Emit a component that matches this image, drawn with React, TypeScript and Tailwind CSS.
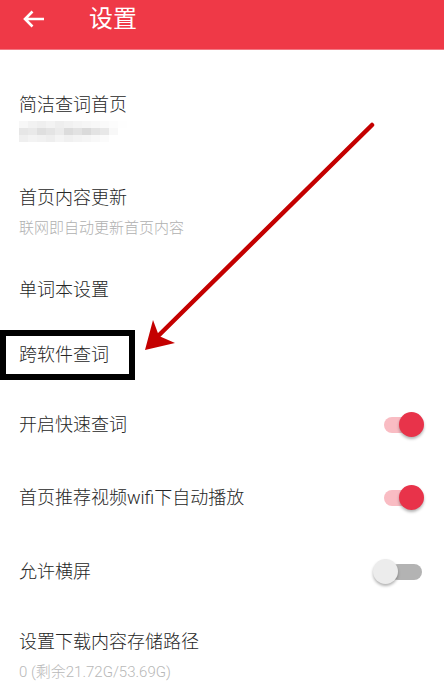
import React from "react";

const font = { fontFamily: 'Roboto, "Noto Sans CJK SC", "Noto Sans", sans-serif' };

function Toggle({ on }: { on: boolean }) {
  return (
    <div className="relative w-[44px] h-[26px] flex items-center">
      <div
        className={
          on
            ? "ml-[2px] w-[32px] h-[16px] rounded-full bg-[#f9bcc3]"
            : "ml-[8px] w-[32px] h-[16px] rounded-full bg-[#b3b3b3]"
        }
      />
      <div
        className={
          on
            ? "absolute left-[17px] top-[0px] w-[25px] h-[25px] rounded-full bg-[#e8334a] shadow-[0_2px_3px_rgba(0,0,0,0.3)]"
            : "absolute left-[-9px] top-[0px] w-[25px] h-[25px] rounded-full bg-[#ececec] shadow-[0_2px_3px_rgba(0,0,0,0.3)]"
        }
      />
    </div>
  );
}

const mosaic = [
  ["#f7f7f7", "#f2f2f2", "#efefef", "#f3f3f3", "#eeeeee", "#f1f1f1", "#f4f4f4", "#f6f6f6", "#f8f8f8", "#fafafa", "#fcfcfc", "#fefefe"],
  ["#e6e6e6", "#e9e9e9", "#dfdfdf", "#e4e4e4", "#ebebeb", "#dcdcdc", "#e2e2e2", "#dadada", "#e3e3e3", "#e8e8e8", "#f8f8f8", "#ffffff"],
  ["#efefef", "#f3f3f3", "#f1f1f1", "#eeeeee", "#f4f4f4", "#f0f0f0", "#f3f3f3", "#f5f5f5", "#f8f8f8", "#fbfbfb", "#ffffff", "#ffffff"],
];

const title = "text-[18px] leading-[24px] text-[#262626] font-light";

export default function App() {
  return (
    <div className="relative w-[444px] h-[696px] overflow-hidden bg-white" style={font}>
      <div className="h-[50px] bg-[#ef3947] flex items-start border-b border-[#f27883]">
        <div className="w-[66px] h-[38px] flex items-center justify-center pl-[2px]">
          <svg width="22" height="18" viewBox="0 0 22 18" fill="none">
            <path d="M21 9H2.5M9.5 1.5L2 9l7.5 7.5" stroke="white" strokeWidth="2.6" strokeLinecap="butt" strokeLinejoin="miter" />
          </svg>
        </div>
        <div className="ml-[23px] h-[37px] flex items-center text-[24px] leading-none text-white">设置</div>
      </div>

      <div className="h-[20px]" />

      {/* Row 1 */}
      <div className="h-[95px] flex flex-col justify-center pl-[19px]">
        <div className={title}>简洁查词首页</div>
        <div className="mt-[4px] flex flex-col">
          {mosaic.map((row, i) => (
            <div key={i} className="flex">
              {row.map((c, j) => (
                <div key={j} className="w-[9px] h-[7px]" style={{ backgroundColor: c }} />
              ))}
            </div>
          ))}
        </div>
      </div>

      {/* Row 2 */}
      <div className="h-[94px] flex flex-col justify-center pl-[19px]">
        <div className={title}>首页内容更新</div>
        <div className="mt-[8px] text-[15px] leading-[20px] text-[#b0b0b0] font-light">联网即自动更新首页内容</div>
      </div>

      {/* Row 3 */}
      <div className="h-[62px] flex items-center pl-[19px]">
        <div className={title}>单词本设置</div>
      </div>

      {/* Row 4 */}
      <div className="h-[68px] flex items-center">
        <div className="w-[135px] h-[50px] border-[6px] border-black flex items-center pl-[13px]">
          <div className={title}>跨软件查词</div>
        </div>
      </div>

      {/* Row 5 */}
      <div className="h-[72px] flex items-center justify-between pl-[19px] pr-[18px]">
        <div className={title}>开启快速查词</div>
        <Toggle on={true} />
      </div>

      {/* Row 6 */}
      <div className="h-[74px] flex items-center justify-between pl-[19px] pr-[18px]">
        <div className={title}>首页推荐视频wifi下自动播放</div>
        <Toggle on={true} />
      </div>

      {/* Row 7 */}
      <div className="h-[74px] flex items-center justify-between pl-[19px] pr-[18px]">
        <div className={title}>允许横屏</div>
        <Toggle on={false} />
      </div>

      {/* Row 8 */}
      <div className="h-[94px] flex flex-col justify-center pl-[19px]">
        <div className={title}>设置下载内容存储路径</div>
        <div className="mt-[8px] text-[15px] leading-[20px] text-[#b8b8b8] font-light">0 (剩余21.72G/53.69G)</div>
      </div>

      {/* Annotation arrow */}
      <svg className="absolute left-0 top-0 pointer-events-none" width="444" height="696" viewBox="0 0 444 696">
        <line x1="372" y1="125" x2="152" y2="342" stroke="#c40000" strokeWidth="4.5" strokeLinecap="round" />
        <path d="M145 350 L153 320 L159 336 L175 343 Z" fill="#c40000" />
      </svg>
    </div>
  );
}
